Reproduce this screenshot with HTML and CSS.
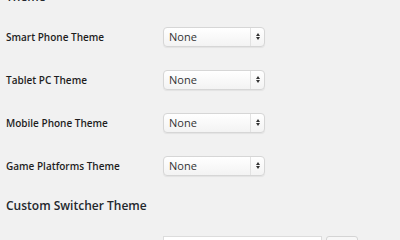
FILE: index.html
```html
<!DOCTYPE html>
<html lang="en">
<head>
  <meta charset="UTF-8" />
  <title>Theme Switcher Settings</title>
  <link rel="stylesheet" href="styles.css">
</head>
<body>

  <h3 class="section-title top">Theme</h3>

  <div class="form-table">
    <div class="row">
      <label>Smart Phone Theme</label>
      <div class="select"><span class="value">None</span><span class="arrows"><i class="up"></i><i class="down"></i></span></div>
    </div>
    <div class="row">
      <label>Tablet PC Theme</label>
      <div class="select"><span class="value">None</span><span class="arrows"><i class="up"></i><i class="down"></i></span></div>
    </div>
    <div class="row">
      <label>Mobile Phone Theme</label>
      <div class="select"><span class="value">None</span><span class="arrows"><i class="up"></i><i class="down"></i></span></div>
    </div>
    <div class="row">
      <label>Game Platforms Theme</label>
      <div class="select"><span class="value">None</span><span class="arrows"><i class="up"></i><i class="down"></i></span></div>
    </div>
  </div>

  <h3 class="section-title">Custom Switcher Theme</h3>

  <div class="custom-row">
    <input type="text" class="text-input" />
    <button class="small-btn"></button>
  </div>

</body>
</html>
```

FILE: styles.css
```css
html, body {
  margin: 0;
  background: #f1f1f1;
  overflow: hidden;
}

body {
  padding: 0 6px;
  font-family: 'Open Sans', sans-serif;
  color: #222;
}

.section-title {
  margin: 0;
  font-size: 12px;
  font-weight: 600;
  line-height: 20px;
  color: #23282d;
}

.section-title.top {
  margin-top: -13px;
}

.form-table {
  margin-top: 8px;
}

.row {
  display: flex;
  align-items: center;
  height: 43px;
}

.row label {
  width: 157px;
  font-size: 10px;
  font-weight: 600;
  color: #1e1e1e;
}

.select {
  width: 100px;
  height: 18px;
  display: flex;
  border: 1px solid #d6d6d6;
  border-radius: 4px;
  background: linear-gradient(#ffffff, #f3f3f3);
  box-shadow: 0 1px 1px rgba(0, 0, 0, 0.06);
}

.select .value {
  flex: 1;
  padding-left: 5px;
  font-size: 11px;
  line-height: 18px;
  color: #333;
}

.select .arrows {
  width: 13px;
  border-left: 1px solid #e2e2e2;
  display: flex;
  flex-direction: column;
  align-items: center;
  justify-content: center;
  gap: 1px;
}

.arrows i {
  width: 0;
  height: 0;
  border-left: 2.5px solid transparent;
  border-right: 2.5px solid transparent;
}

.arrows .up {
  border-bottom: 3px solid #333;
}

.arrows .down {
  border-top: 3px solid #333;
}

.form-table + .section-title {
  margin-top: 9px;
}

.custom-row {
  display: flex;
  gap: 4px;
  padding-left: 157px;
  margin-top: 20px;
}

.text-input {
  width: 159px;
  height: 22px;
  margin: 0;
  padding: 0;
  border: 1px solid #dcdcdc;
  background: #fff;
  box-sizing: border-box;
}

.small-btn {
  width: 32px;
  height: 22px;
  border: 1px solid #d4d4d4;
  border-radius: 3px;
  background: #f7f7f7;
}
```
